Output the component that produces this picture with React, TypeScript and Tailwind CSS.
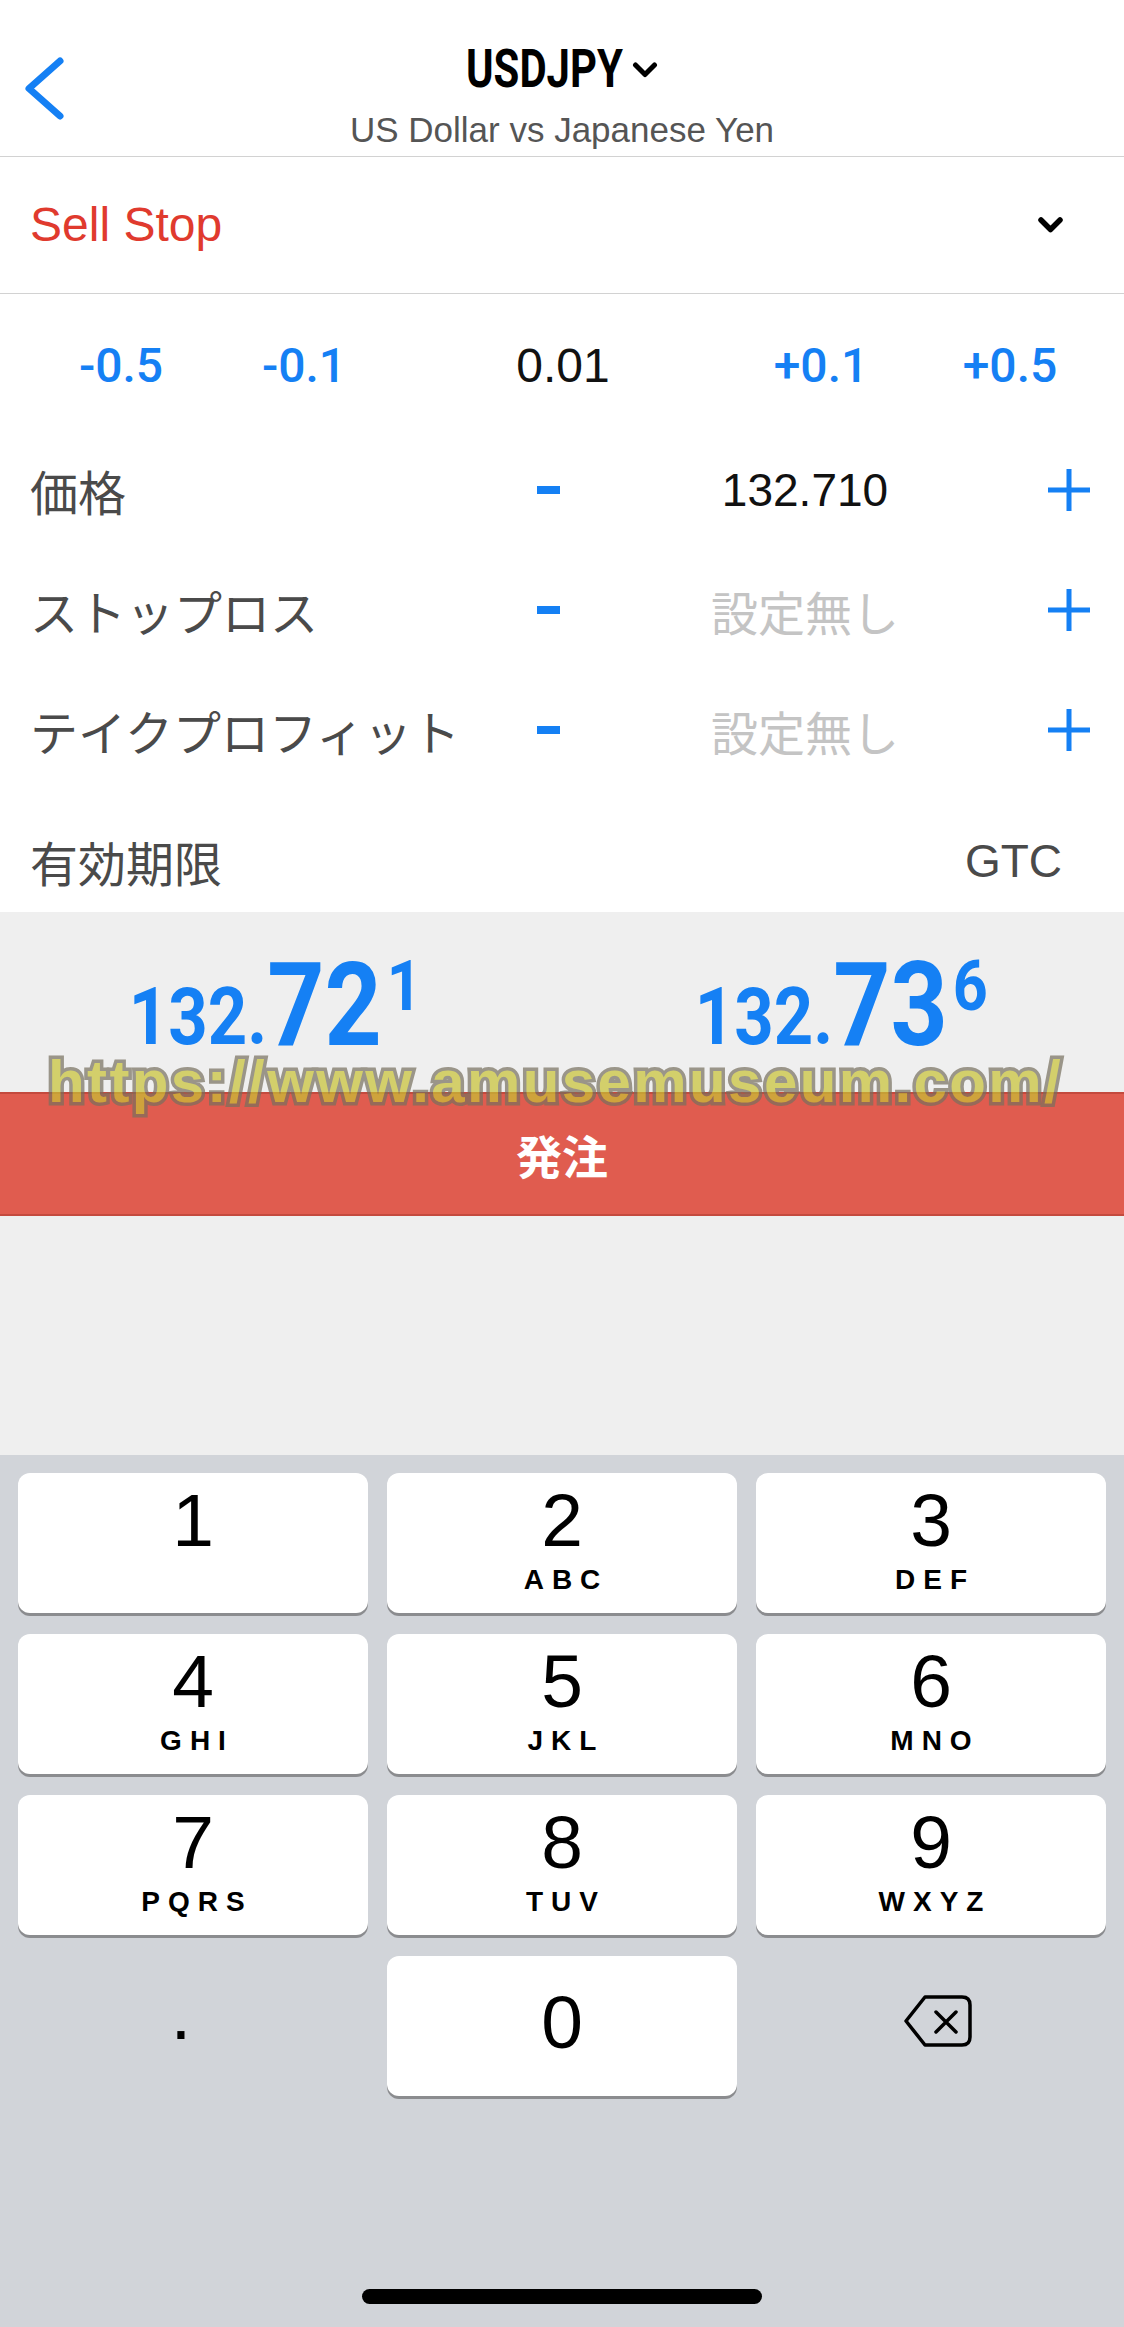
import React from "react";

const BLUE = "#1580f4";

function Plus() {
  return (
    <svg width="44" height="44" viewBox="0 0 44 44" fill="none">
      <path d="M22 1 V43 M1 22 H43" stroke={BLUE} strokeWidth="5" />
    </svg>
  );
}

function FieldRow({ label, value, muted }: { label: string; value: string; muted?: boolean }) {
  return (
    <div className="h-[120px] grid grid-cols-[500px_96px_418px_110px] items-center">
      <span className="pl-[30px] text-[48px] leading-[48px] text-[#4a4a4a] font-['Noto_Sans_CJK_JP',sans-serif] whitespace-nowrap">
        {label}
      </span>
      <div className="flex justify-center">
        <div className="w-[23px] h-[8px] bg-[#1580f4]" />
      </div>
      {muted ? (
        <span className="text-center text-[47px] leading-[47px] text-[#c4c4c4] font-['Noto_Sans_CJK_JP',sans-serif]">
          {value}
        </span>
      ) : (
        <span className="text-center text-[46px] leading-[46px] text-[#111]">{value}</span>
      )}
      <div className="flex justify-center">
        <Plus />
      </div>
    </div>
  );
}

function Price({ a, b, c }: { a: string; b: string; c: string }) {
  return (
    <div className="flex justify-center">
      <div className="flex items-start scale-x-[0.86] text-[#1580f4] font-['Roboto',sans-serif] font-bold">
        <span className="mt-[30px] text-[80px] leading-[80px]">{a}</span>
        <span className="text-[116px] leading-[116px]">{b}</span>
        <span className="mt-[3px] ml-[6px] text-[71px] leading-[71px]">{c}</span>
      </div>
    </div>
  );
}

function Key({ d, l }: { d: string; l?: string }) {
  return (
    <div className="h-[140px] rounded-[12px] bg-white shadow-[0_3px_0_#8b8c8f] flex flex-col items-center pt-[10px]">
      <span className="text-[75px] leading-[75px] text-black">{d}</span>
      {l && (
        <span className="mt-[8px] pl-[8px] text-[28px] leading-[28px] font-bold tracking-[8px] text-black">
          {l}
        </span>
      )}
    </div>
  );
}

export default function App() {
  return (
    <div className="relative w-[1124px] h-[2327px] overflow-hidden bg-white font-['Liberation_Sans',Arial,sans-serif]">
      {/* Header */}
      <header className="relative h-[157px] border-b border-[#d2d2d2] flex flex-col items-center">
        <button className="absolute left-[20px] top-[54px]">
          <svg width="48" height="70" viewBox="0 0 48 70" fill="none">
            <path
              d="M40 7 L9 34.5 L40 62"
              stroke={BLUE}
              strokeWidth="7"
              strokeLinecap="round"
              strokeLinejoin="round"
            />
          </svg>
        </button>
        <div className="mt-[43px] h-[53px] flex items-center">
          <span className="block w-[155px] h-[53px] whitespace-nowrap">
            <span className="inline-block origin-left scale-x-[0.79] text-[53px] leading-[53px] font-bold text-black font-['Roboto',sans-serif]">
              USDJPY
            </span>
          </span>
          <svg className="ml-[11px]" width="26" height="18" viewBox="0 0 26 18" fill="none">
            <path
              d="M3.5 4 L13 13.5 L22.5 4"
              stroke="#000"
              strokeWidth="5"
              strokeLinecap="round"
              strokeLinejoin="round"
            />
          </svg>
        </div>
        <div className="mt-[16px] text-[35px] leading-[35px] text-[#555] whitespace-nowrap">
          US Dollar vs Japanese Yen
        </div>
      </header>

      {/* Order type */}
      <div className="h-[137px] border-b border-[#d2d2d2] flex items-center justify-between pl-[30px] pr-[60px]">
        <span className="text-[48px] leading-[48px] text-[#e03a2e]">Sell Stop</span>
        <svg width="27" height="18" viewBox="0 0 27 18" fill="none">
          <path
            d="M4 4 L13.5 13.5 L23 4"
            stroke="#000"
            strokeWidth="5.5"
            strokeLinecap="round"
            strokeLinejoin="round"
          />
        </svg>
      </div>

      {/* Steps */}
      <div className="h-[136px] pt-[8px] grid grid-cols-[242px_124px_394px_122px_242px] items-center text-[48px] leading-[48px]">
        <span className="text-center text-[#1580f4] font-['Roboto',sans-serif] font-medium">-0.5</span>
        <span className="text-center text-[#1580f4] font-['Roboto',sans-serif] font-medium">-0.1</span>
        <span className="text-center text-[#111]">0.01</span>
        <span className="text-center text-[#1580f4] font-['Roboto',sans-serif] font-medium">+0.1</span>
        <span className="pl-[14px] text-center text-[#1580f4] font-['Roboto',sans-serif] font-medium">+0.5</span>
      </div>

      <FieldRow label="価格" value="132.710" />
      <FieldRow label="ストップロス" value="設定無し" muted />
      <FieldRow label="テイクプロフィット" value="設定無し" muted />

      {/* Expiry */}
      <div className="h-[122px] pt-[20px] flex items-center justify-between pl-[30px] pr-[62px]">
        <span className="text-[48px] leading-[48px] text-[#4a4a4a] font-['Noto_Sans_CJK_JP',sans-serif]">
          有効期限
        </span>
        <span className="text-[46px] leading-[46px] text-[#4a4a4a]">GTC</span>
      </div>

      {/* Quotes + order button */}
      <div className="bg-[#efefef]">
        <div className="h-[180px] pt-[35px] grid grid-cols-2">
          <div className="pr-[12px]">
            <Price a="132." b="72" c="1" />
          </div>
          <div className="pr-[4px]">
            <Price a="132." b="73" c="6" />
          </div>
        </div>
        <div className="h-[124px] bg-[#e05c4f] border-y-[2px] border-[#c44a3e] flex items-center justify-center">
          <span className="text-white font-bold text-[46px] leading-[46px] font-['Noto_Sans_CJK_JP',sans-serif]">
            発注
          </span>
        </div>
        <div className="h-[239px]" />
      </div>

      {/* Keyboard */}
      <div className="h-[872px] bg-[#d1d4d9] flex flex-col">
        <div className="grid grid-cols-3 gap-x-[19px] gap-y-[21px] px-[18px] pt-[18px]">
          <Key d="1" />
          <Key d="2" l="ABC" />
          <Key d="3" l="DEF" />
          <Key d="4" l="GHI" />
          <Key d="5" l="JKL" />
          <Key d="6" l="MNO" />
          <Key d="7" l="PQRS" />
          <Key d="8" l="TUV" />
          <Key d="9" l="WXYZ" />
          <div className="h-[140px] flex justify-center pt-[20px] pr-[24px]">
            <span className="text-[75px] leading-[75px] text-black">.</span>
          </div>
          <div className="h-[140px] rounded-[12px] bg-white shadow-[0_3px_0_#8b8c8f] flex justify-center pt-[29px]">
            <span className="text-[75px] leading-[75px] text-black">0</span>
          </div>
          <div className="h-[140px] flex items-center justify-center pl-[14px] pb-[10px]">
            <svg width="70" height="54" viewBox="0 0 70 54" fill="none">
              <path
                d="M22 3 H59 Q67 3 67 11 V43 Q67 51 59 51 H22 L3 27 Z"
                stroke="#000"
                strokeWidth="3.5"
                strokeLinejoin="round"
              />
              <path d="M33 18 L53 38 M53 18 L33 38" stroke="#000" strokeWidth="3.5" strokeLinecap="round" />
            </svg>
          </div>
        </div>
        <div className="mt-auto mb-[23px] mx-auto w-[400px] h-[15px] rounded-full bg-black" />
      </div>

      {/* Watermark overlay */}
      <div className="pointer-events-none absolute left-[48px] top-[1052px] whitespace-nowrap opacity-70 text-[60px] leading-[60px] font-bold tracking-[2.4px] text-[#c8c234] [-webkit-text-stroke:7px_#77705e] [paint-order:stroke_fill]">
        https://www.amusemuseum.com/
      </div>
    </div>
  );
}
